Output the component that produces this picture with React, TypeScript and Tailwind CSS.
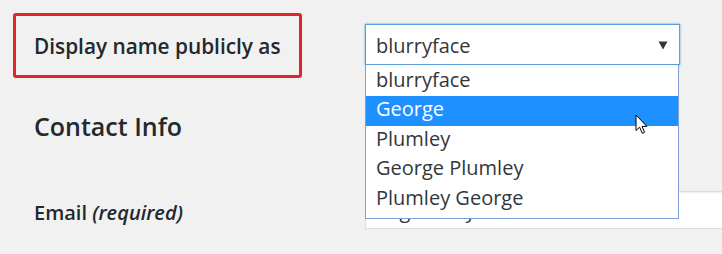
import React from "react";

const items = ["blurryface", "George", "Plumley", "George Plumley", "Plumley George"];

function Cursor() {
  return (
    <svg width="14" height="21" viewBox="0 0 14 21" className="absolute z-20 left-[635px] top-[114px]">
      <path
        d="M1 1 L1 16.5 L4.6 13.2 L7.3 19.3 L9.6 18.3 L7 12.4 L11.9 12.4 Z"
        fill="#ffffff"
        stroke="#000000"
        strokeWidth="1"
        strokeLinejoin="miter"
      />
    </svg>
  );
}

export default function App() {
  return (
    <div
      className="relative w-[722px] h-[254px] overflow-hidden bg-[#f1f1f1] text-[#23282d]"
      style={{ fontFamily: '"Open Sans", "Noto Sans", sans-serif' }}
    >
      <div className="pt-[13px] pl-[13px] flex items-start">
        <div className="w-[289px] h-[65px] border-[3px] border-[#e5232b] rounded-[3px] flex items-center pl-[18px] pt-[1px]">
          <span className="text-[20.8px] font-semibold leading-none">Display name publicly as</span>
        </div>
        <div className="relative ml-[63px] mt-[11px] w-[315px]">
          <div className="h-[41px] bg-white border border-[#5b9dd9] shadow-[0_0_2px_rgba(30,140,190,0.8)] flex items-center justify-between pl-[10px] pr-[10px]">
            <span className="text-[20px] leading-[27px] pt-[1px] text-[#32373c]">blurryface</span>
            <svg width="10" height="9" viewBox="0 0 10 9" className="mr-[1px] mt-[1px]">
              <path d="M0.5 0.5 L9.5 0.5 L5 8.5 Z" fill="#32373c" />
            </svg>
          </div>
          <div className="absolute left-0 top-[41px] z-10 w-[314px] bg-white border border-t-0 border-[#7b9fd6] pt-[1.5px] pb-[3.5px]">
            {items.map((it, i) => (
              <div
                key={it}
                className={
                  "h-[29.5px] leading-[25px] pl-[10px] text-[20px] " +
                  (i === 1 ? "bg-[#1e90ff] text-white" : "text-[#32373c]")
                }
              >
                {it}
              </div>
            ))}
          </div>
        </div>
      </div>

      <h2 className="ml-[34px] mt-[30px] text-[25px] font-semibold leading-[36px]">Contact Info</h2>

      <div className="flex items-start mt-[47px]">
        <div className="w-[365px] pl-[34px] pt-[8px] text-[20px] font-semibold leading-[27px]">
          Email <em className="italic font-semibold">(required)</em>
        </div>
        <div className="flex-1 h-[38px] bg-white border border-[#dddddd] border-r-0 shadow-[inset_0_1px_2px_rgba(0,0,0,0.07)] pl-[10px] text-[20px] leading-[37px] whitespace-nowrap overflow-hidden text-[#32373c]">
          angelo.kay
        </div>
      </div>

      <Cursor />
    </div>
  );
}
